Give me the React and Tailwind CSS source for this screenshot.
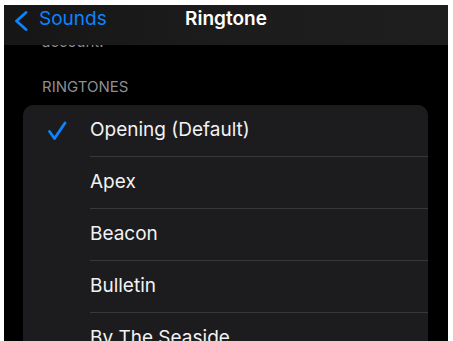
import React from 'react';

const ringtones = [
    'Opening (Default)',
    'Apex',
    'Beacon',
    'Bulletin',
    'By The Seaside',
    'Chimes',
    'Circuit',
];

const Check = () => (
    <svg width="20" height="20" viewBox="0 0 20 20" fill="none">
        <path d="M2.5 10.5 L7.5 17.5 L18 2" stroke="#0a84ff" strokeWidth="2.8" strokeLinecap="round" strokeLinejoin="round" />
    </svg>
);

const App = () => {
    return (
        <div className="min-h-screen bg-white pt-[5px] pl-[4px] pr-[5px] font-['Inter',sans-serif]">
            <div className="relative h-[336px] overflow-hidden bg-black">
                {/* Nav bar sits over the scrolled list */}
                <header className="absolute inset-x-0 top-0 z-10 grid h-[40px] grid-cols-3 bg-gradient-to-r from-[#161616] via-[#1c1c1c] to-[#1e1e1e] pt-[2px]">
                    <div className="flex items-start">
                        <svg className="ml-[10px] mt-[4px]" width="14" height="20" viewBox="0 0 14 20" fill="none">
                            <path d="M12 1.5 L2.5 10 L12 18.5" stroke="#0a84ff" strokeWidth="2.8" strokeLinecap="round" strokeLinejoin="round" />
                        </svg>
                        <span className="ml-[11px] text-[19px] leading-[24px] text-[#0a84ff]">Sounds</span>
                    </div>
                    <h1 className="text-center text-[19px] font-semibold leading-[24px] text-white">Ringtone</h1>
                    <div />
                </header>

                <p className="mt-[27px] pl-[38px] text-[15px] leading-[20px] text-[#8e8e93]">account.</p>

                <h2 className="mt-[25px] pl-[38px] text-[15px] leading-[20px] text-[#8e8e93]">RINGTONES</h2>

                <ul className="ml-[19px] mr-[20px] mt-[8px] overflow-hidden rounded-[10px] bg-[#1c1c1e]">
                    {ringtones.map((name, i) => (
                        <li key={name} className="flex h-[52px] items-center">
                            <div className="flex w-[67px] justify-center">
                                {i === 0 && <Check />}
                            </div>
                            <div className="flex h-full flex-1 items-center border-b border-[#38383a] text-[19px] text-[#f2f2f2]">
                                {name}
                            </div>
                        </li>
                    ))}
                </ul>
            </div>
        </div>
    );
};

export default App;
